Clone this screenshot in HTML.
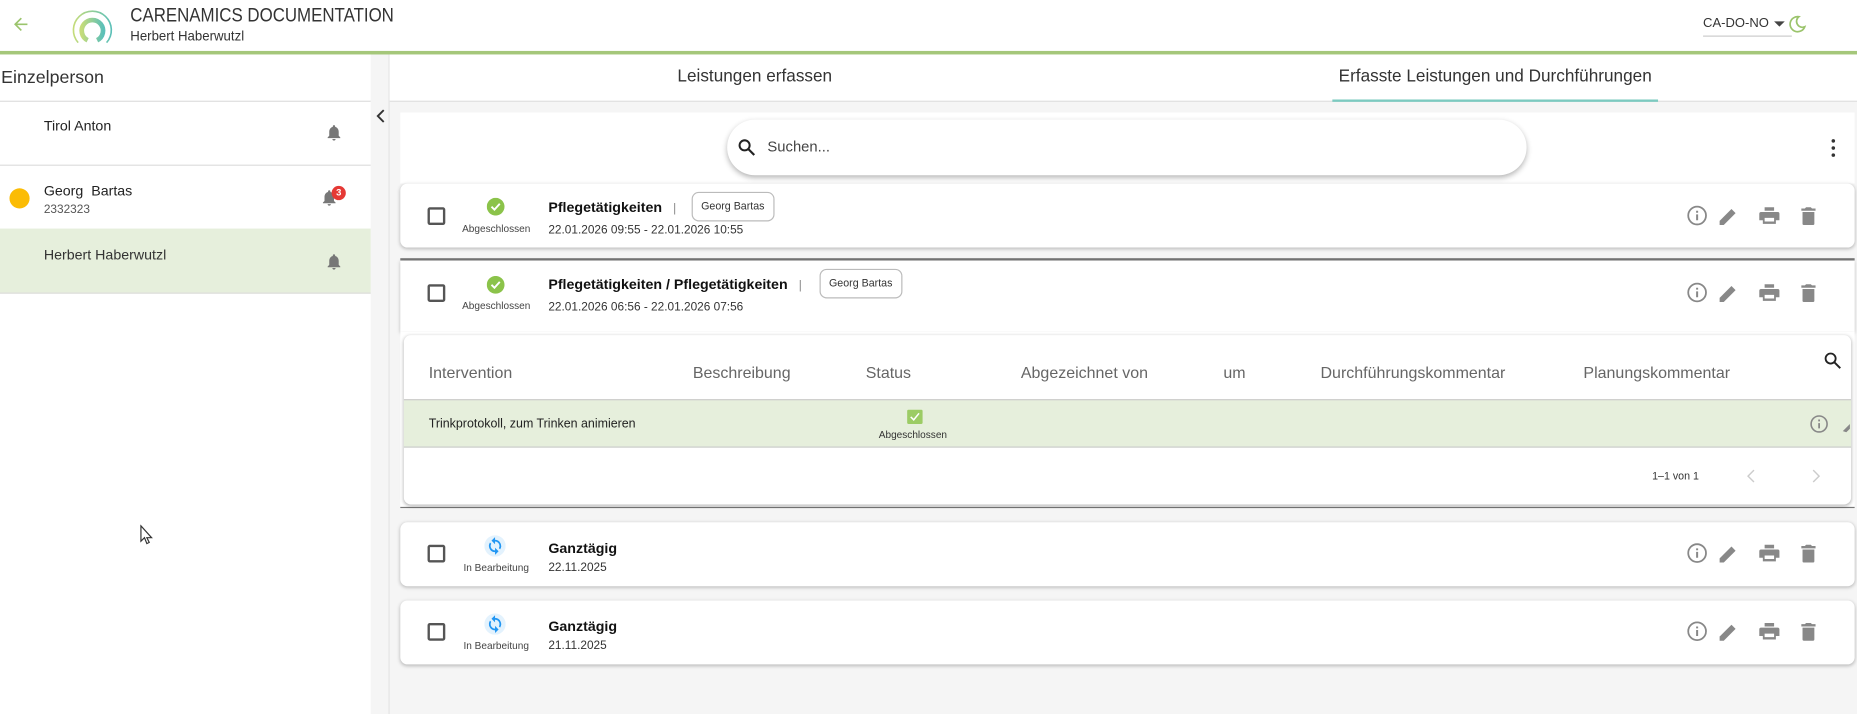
<!DOCTYPE html>
<html><head><meta charset="utf-8"><style>
*{box-sizing:border-box;margin:0;padding:0}
html,body{width:1857px;height:714px;overflow:hidden;background:#fff;font-family:"Liberation Sans",sans-serif;color:#222}
#w{position:absolute;left:0;top:0;width:1568px;height:603px;transform:scale(1.18431);transform-origin:0 0;background:#f5f5f5}
.a{position:absolute}
.card{position:absolute;left:338px;width:1228px;background:#fff;border-radius:6px;box-shadow:0 1px 3px rgba(0,0,0,.25)}
.cb{position:absolute;left:23px;width:15px;height:15px;border:2px solid #555;border-radius:2px}
.st{position:absolute;left:46px;width:70px;text-align:center;font-size:8.5px;color:#444}
.t{position:absolute;left:125px;font-size:12px;font-weight:bold;color:#111}
.d{position:absolute;left:125px;font-size:10px;color:#333}
.chip{position:absolute;border:1px solid #bbb;border-radius:6px;font-size:9px;color:#333;padding:0 7px;height:25px;line-height:23px}
.ic{position:absolute}
.th{position:absolute;top:307px;font-size:13.5px;color:#666}
</style></head><body><div id="w">
<!-- header -->
<div class="a" style="left:0;top:0;width:1568px;height:44px;background:#fff"></div>
<div class="a" style="left:0;top:43px;width:1568px;height:3px;background:#a5c77a"></div>
<svg class="a" style="left:9px;top:12px" width="17" height="17" viewBox="0 0 24 24"><path d="M20 11H7.8l5.6-5.6L12 4l-8 8 8 8 1.4-1.4L7.8 13H20z" fill="#9bc46c"/></svg>
<svg class="a" style="left:59px;top:3px" width="38" height="38" viewBox="0 0 38 38"><defs><linearGradient id="g" x1="0" x2="1"><stop offset="0" stop-color="#c5dc7a"/><stop offset="1" stop-color="#5cc0b8"/></linearGradient></defs><path d="M7 33A16 16 0 1 1 31 33" fill="none" stroke="url(#g)" stroke-width="1.4"/><path d="M15 31A9 9 0 1 1 23 31" fill="none" stroke="url(#g)" stroke-width="4"/></svg>
<div class="a" style="left:110px;top:5px;font-size:16px;color:#333;transform:scaleX(.89);transform-origin:0 0;white-space:nowrap">CARENAMICS DOCUMENTATION</div>
<div class="a" style="left:110px;top:23px;font-size:12px;color:#333;transform:scaleX(.93);transform-origin:0 0;white-space:nowrap">Herbert Haberwutzl</div>
<div class="a" style="left:1438px;top:14px;font-size:11px;color:#333">CA-DO-NO</div>
<svg class="a" style="left:1497px;top:17px" width="12" height="8"><path d="M1 1h9L5.5 5.5z" fill="#444"/></svg>
<div class="a" style="left:1438px;top:30px;width:75px;height:1px;background:#ccc"></div>
<svg class="a" style="left:1509px;top:12px" width="17" height="17" viewBox="0 0 24 24"><path d="M14 3a9 9 0 1 0 7 12A7 7 0 0 1 14 3z" fill="none" stroke="#9bc46c" stroke-width="2"/></svg>
<!-- left panel -->
<div class="a" style="left:0;top:46px;width:313px;height:557px;background:#fff"></div>
<div class="a" style="left:1px;top:57px;font-size:15px;color:#333">Einzelperson</div>
<div class="a" style="left:0;top:85px;width:313px;height:1px;background:#ddd"></div>
<div class="a" style="left:37px;top:99px;font-size:12px;color:#222">Tirol Anton</div>
<div class="a" style="left:0;top:139px;width:313px;height:1px;background:#ddd"></div>
<div class="a" style="left:8px;top:159px;width:17px;height:17px;border-radius:50%;background:#fbbc05"></div>
<div class="a" style="left:37px;top:154px;font-size:12px;color:#222">Georg&nbsp; Bartas</div>
<div class="a" style="left:37px;top:172px;font-size:10px;color:#555">2332323</div>
<div class="a" style="left:0;top:193px;width:313px;height:55px;background:#e6efdc;border-bottom:1px solid #ddd"></div>
<div class="a" style="left:37px;top:208px;font-size:12px;color:#333">Herbert Haberwutzl</div>
<svg class="a" style="left:274px;top:104px" width="16" height="16" viewBox="0 0 24 24"><path d="M12 22a2 2 0 0 0 2-2h-4a2 2 0 0 0 2 2zm6-6v-5c0-3-1.6-5.6-4.5-6.3V4a1.5 1.5 0 0 0-3 0v.7C7.6 5.4 6 8 6 11v5l-2 2v1h16v-1z" fill="#777"/></svg>
<svg class="a" style="left:270px;top:159px" width="16" height="16" viewBox="0 0 24 24"><path d="M12 22a2 2 0 0 0 2-2h-4a2 2 0 0 0 2 2zm6-6v-5c0-3-1.6-5.6-4.5-6.3V4a1.5 1.5 0 0 0-3 0v.7C7.6 5.4 6 8 6 11v5l-2 2v1h16v-1z" fill="#777"/></svg>
<div class="a" style="left:280px;top:157px;width:12px;height:12px;border-radius:50%;background:#e53935;color:#fff;font-size:8px;font-weight:bold;text-align:center;line-height:12px">3</div>
<svg class="a" style="left:274px;top:213px" width="16" height="16" viewBox="0 0 24 24"><path d="M12 22a2 2 0 0 0 2-2h-4a2 2 0 0 0 2 2zm6-6v-5c0-3-1.6-5.6-4.5-6.3V4a1.5 1.5 0 0 0-3 0v.7C7.6 5.4 6 8 6 11v5l-2 2v1h16v-1z" fill="#777"/></svg>
<svg class="a" style="left:317px;top:92px" width="10" height="12"><path d="M7 1L2 6l5 5" fill="none" stroke="#333" stroke-width="1.6"/></svg>
<div class="a" style="left:328px;top:46px;width:1px;height:557px;background:#e4e4e4"></div>
<!-- tabs -->
<div class="a" style="left:329px;top:46px;width:1239px;height:40px;background:#fff;border-bottom:1px solid #ddd"></div>
<div class="a" style="left:572px;top:57px;font-size:14.5px;color:#333">Leistungen erfassen</div>
<div class="a" style="left:1125px;top:57px;font-size:14.5px;color:#333;width:275px;text-align:center">Erfasste Leistungen und Durchführungen</div>
<div class="a" style="left:1125px;top:84px;width:275px;height:2px;background:#7ccac0"></div>
<!-- top panel -->
<div class="a" style="left:338px;top:95px;width:1228px;height:60px;background:#fff"></div>
<div class="a" style="left:614px;top:101px;width:675px;height:47px;background:#fff;border-radius:24px;box-shadow:0 2px 5px rgba(0,0,0,.3)"></div>
<svg class="a" style="left:622px;top:116px" width="17" height="17" viewBox="0 0 24 24"><circle cx="9.5" cy="9.5" r="6" fill="none" stroke="#222" stroke-width="2.4"/><path d="M14 14l7 7" stroke="#222" stroke-width="2.6"/></svg>
<div class="a" style="left:648px;top:117px;font-size:12.5px;color:#444">Suchen...</div>
<svg class="a" style="left:1545px;top:117px" width="6" height="16"><circle cx="3" cy="2" r="1.5" fill="#333"/><circle cx="3" cy="8" r="1.5" fill="#333"/><circle cx="3" cy="14" r="1.5" fill="#333"/></svg>
<!-- cards -->
<div class="card" style="top:155px;height:54px"><div class="cb" style="top:20px"></div>
<svg class="ic" style="left:73px;top:12px" width="15" height="15"><circle cx="7.5" cy="7.5" r="7.5" fill="#8bc34a"/><path d="M4 7.5l2.5 2.5L11 5" fill="none" stroke="#fff" stroke-width="1.6"/></svg>
<div class="st" style="top:33px">Abgeschlossen</div><div class="t" style="top:13px">Pflegetätigkeiten <span style="font-weight:normal;color:#888;font-size:10px;margin-left:6px">|</span></div>
<div class="chip" style="left:246px;top:7px">Georg Bartas</div><div class="d" style="top:34px">22.01.2026 09:55 - 22.01.2026 10:55</div></div>
<div class="a" style="left:338px;top:218px;width:1228px;height:1.5px;background:#777"></div>
<div class="card" style="top:220px;height:60px;border-radius:0"><div class="cb" style="top:20px"></div>
<svg class="ic" style="left:73px;top:13px" width="15" height="15"><circle cx="7.5" cy="7.5" r="7.5" fill="#8bc34a"/><path d="M4 7.5l2.5 2.5L11 5" fill="none" stroke="#fff" stroke-width="1.6"/></svg>
<div class="st" style="top:33px">Abgeschlossen</div><div class="t" style="top:13px">Pflegetätigkeiten / Pflegetätigkeiten <span style="font-weight:normal;color:#888;font-size:10px;margin-left:6px">|</span></div>
<div class="chip" style="left:354px;top:7px">Georg Bartas</div><div class="d" style="top:34px">22.01.2026 06:56 - 22.01.2026 07:56</div></div>
<div class="a" style="left:338px;top:280px;width:1228px;height:149px;background:#fff;border-bottom:1.5px solid #777"></div>
<div class="a" style="left:341px;top:283px;width:1222px;height:143px;background:#fff;border-radius:6px;box-shadow:0 1px 3px rgba(0,0,0,.3)"></div>
<div class="th" style="left:362px">Intervention</div><div class="th" style="left:585px">Beschreibung</div><div class="th" style="left:731px">Status</div><div class="th" style="left:862px">Abgezeichnet von</div><div class="th" style="left:1033px">um</div><div class="th" style="left:1115px">Durchführungskommentar</div><div class="th" style="left:1337px">Planungskommentar</div>
<svg class="a" style="left:1539px;top:296px" width="17" height="17" viewBox="0 0 24 24"><circle cx="9.5" cy="9.5" r="6" fill="none" stroke="#222" stroke-width="2.2"/><path d="M14 14l7 7" stroke="#222" stroke-width="2.4"/></svg>
<div class="a" style="left:341px;top:337px;width:1222px;height:41px;background:#e6efdc;border-top:1px solid #ccc;border-bottom:1px solid #ccc"></div>
<div class="a" style="left:362px;top:352px;font-size:10.5px;color:#222">Trinkprotokoll, zum Trinken animieren</div>
<div class="a" style="left:766px;top:346px;width:13px;height:12px;background:#9ccc65;border-radius:1px"></div>
<svg class="a" style="left:766px;top:346px" width="13" height="12"><path d="M3 6l2.5 2.5L10 3" fill="none" stroke="#fff" stroke-width="1.3"/></svg>
<div class="a" style="left:742px;top:362px;font-size:8.5px;color:#333">Abgeschlossen</div>
<svg class="a" style="left:1527px;top:349px" width="18" height="18" viewBox="0 0 24 24"><circle cx="12" cy="12" r="9" fill="none" stroke="#888" stroke-width="1.8"/><path d="M12 11v6M12 7v2" stroke="#888" stroke-width="2"/></svg>
<svg class="a" style="left:1554px;top:352px" width="9" height="14"><path d="M2 12l6-6v4l-3 3z" fill="#888"/></svg>
<div class="a" style="left:1395px;top:397px;font-size:9px;color:#333">1–1 von 1</div>
<svg class="a" style="left:1475px;top:396px" width="8" height="12"><path d="M6 1L1 6l5 5" fill="none" stroke="#ccc" stroke-width="1.2"/></svg>
<svg class="a" style="left:1529px;top:396px" width="8" height="12"><path d="M2 1l5 5-5 5" fill="none" stroke="#ccc" stroke-width="1.2"/></svg>
<div class="card" style="top:441px;height:54px"><div class="cb" style="top:19px"></div>
<svg class="ic" style="left:71px;top:11px" width="18" height="18" viewBox="0 0 24 24"><circle cx="12" cy="12" r="12" fill="#e3f2fd"/><path d="M12 5V2L8 6l4 4V7a5 5 0 0 1 4.3 7.5l1.4 1.4A7 7 0 0 0 12 5zm0 12a5 5 0 0 1-4.3-7.5L6.3 8.1A7 7 0 0 0 12 19v3l4-4-4-4z" fill="#2196f3"/></svg>
<div class="st" style="top:33px">In Bearbeitung</div><div class="t" style="top:15px">Ganztägig</div><div class="d" style="top:33px">22.11.2025</div></div>
<div class="card" style="top:507px;height:54px"><div class="cb" style="top:19px"></div>
<svg class="ic" style="left:71px;top:11px" width="18" height="18" viewBox="0 0 24 24"><circle cx="12" cy="12" r="12" fill="#e3f2fd"/><path d="M12 5V2L8 6l4 4V7a5 5 0 0 1 4.3 7.5l1.4 1.4A7 7 0 0 0 12 5zm0 12a5 5 0 0 1-4.3-7.5L6.3 8.1A7 7 0 0 0 12 19v3l4-4-4-4z" fill="#2196f3"/></svg>
<div class="st" style="top:33px">In Bearbeitung</div><div class="t" style="top:15px">Ganztägig</div><div class="d" style="top:33px">21.11.2025</div></div>
<!-- action icons -->
<svg width="0" height="0" style="position:absolute"><defs>
<g id="acts">
<circle cx="9" cy="9" r="7.5" fill="none" stroke="#888" stroke-width="1.5"/><path d="M9 8v5M9 5v1.6" stroke="#888" stroke-width="1.7"/>
<path d="M28 17v-3.5l10-10 3.5 3.5-10 10z" fill="#888"/>
<path d="M66 2h8v3h-8zM63 6h14a1.5 1.5 0 0 1 1.5 1.5V13h-3v3h-11v-3h-3V7.5A1.5 1.5 0 0 1 63 6z" fill="#888"/><path d="M66 11h8v3h-8z" fill="#fff"/>
<path d="M101 2h4l1 1h3v2h-12V3h3zM98 6h10v10a1 1 0 0 1-1 1h-8a1 1 0 0 1-1-1z" fill="#888"/>
</g></defs></svg>
<svg class="a" style="left:1424px;top:173px" width="112" height="20"><use href="#acts"/></svg>
<svg class="a" style="left:1424px;top:238px" width="112" height="20"><use href="#acts"/></svg>
<svg class="a" style="left:1424px;top:458px" width="112" height="20"><use href="#acts"/></svg>
<svg class="a" style="left:1424px;top:524px" width="112" height="20"><use href="#acts"/></svg>
<svg class="a" style="left:118px;top:443px" width="12" height="17"><path d="M1 1v13l3-3 2 5 2-1-2-4h4z" fill="#fff" stroke="#333" stroke-width="1"/></svg>
</div></body></html>
